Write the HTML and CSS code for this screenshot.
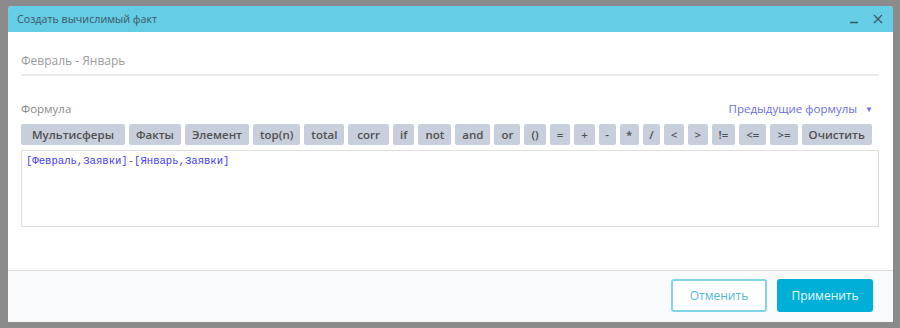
FILE: index.html
```html
<!DOCTYPE html>
<html lang="ru">

<head>
    <meta charset="UTF-8">
    <title>Создать вычислимый факт</title>
    <link rel="stylesheet" href="styles.css">
</head>

<body>
    <div class="dialog">
        <div class="dialog-header">
            <span class="dialog-title">Создать вычислимый факт</span>
            <div class="header-tools">
                <svg class="tool-icon" width="10" height="10" viewBox="0 0 10 10">
                    <path d="M1 8.5h8" stroke="#3f5a66" stroke-width="1.3" />
                </svg>
                <svg class="tool-icon" width="10" height="10" viewBox="0 0 10 10">
                    <path d="M1 1l8 8M9 1l-8 8" stroke="#3f5a66" stroke-width="1.4" />
                </svg>
            </div>
        </div>

        <div class="dialog-body">
            <div class="name-field">Февраль - Январь</div>

            <div class="formula-head">
                <span class="formula-label">Формула</span>
                <span class="prev-formulas">Предыдущие формулы <span class="caret">&#9660;</span></span>
            </div>

            <div class="toolbar">
                <button class="op-btn op-wide">Мультисферы</button>
                <button class="op-btn">Факты</button>
                <button class="op-btn">Элемент</button>
                <button class="op-btn">top(n)</button>
                <button class="op-btn">total</button>
                <button class="op-btn op-func">corr</button>
                <button class="op-btn">if</button>
                <button class="op-btn">not</button>
                <button class="op-btn">and</button>
                <button class="op-btn">or</button>
                <button class="op-btn">()</button>
                <button class="op-btn">=</button>
                <button class="op-btn">+</button>
                <button class="op-btn op-sym">-</button>
                <button class="op-btn op-sym">*</button>
                <button class="op-btn op-sym">/</button>
                <button class="op-btn op-sym">&lt;</button>
                <button class="op-btn op-sym">&gt;</button>
                <button class="op-btn">!=</button>
                <button class="op-btn">&lt;=</button>
                <button class="op-btn">&gt;=</button>
                <button class="op-btn">Очистить</button>
            </div>

            <div class="editor"><span class="token">[Февраль,Заявки]</span><span class="op">-</span><span class="token">[Январь,Заявки]</span></div>
        </div>

        <div class="dialog-footer">
            <button class="btn btn-cancel">Отменить</button>
            <button class="btn btn-apply">Применить</button>
        </div>
    </div>
</body>

</html>
```

FILE: styles.css
```css
* {
    margin: 0;
    padding: 0;
    box-sizing: border-box;
}

body {
    font-family: 'Open Sans', sans-serif;
    background-color: #8b8b8b;
    color: #555;
}

.dialog {
    display: flex;
    flex-direction: column;
    width: 885px;
    height: 316px;
    margin: 6px 0 0 8px;
    background-color: white;
    border-radius: 4px 4px 0 0;
    overflow: hidden;
}

.dialog-header {
    display: flex;
    align-items: center;
    justify-content: space-between;
    height: 26px;
    padding: 0 10px 0 9px;
    background-color: #66cde6;
}

.dialog-title {
    font-size: 10.7px;
    color: #3b5664;
}

.header-tools {
    display: flex;
    gap: 14px;
}

.dialog-body {
    flex: 1;
    padding: 0 14px 0 13px;
}

.name-field {
    height: 29px;
    margin-top: 15px;
    padding-top: 5px;
    font-size: 12px;
    color: #9a9a9a;
    border-bottom: 2px solid #ebebeb;
}

.formula-head {
    display: flex;
    justify-content: space-between;
    align-items: center;
    height: 20px;
    margin-top: 22px;
    padding-right: 6px;
    font-size: 11.5px;
}

.formula-label {
    color: #8a8a8a;
}

.prev-formulas {
    color: #6f6ee0;
}

.caret {
    font-size: 8px;
    margin-left: 5px;
    vertical-align: 1px;
}

.toolbar {
    display: flex;
    gap: 4px;
    margin-top: 6px;
}

.op-btn {
    height: 21px;
    min-width: 16px;
    padding: 0 7px;
    font-family: 'Open Sans', sans-serif;
    font-size: 11.5px;
    font-weight: 600;
    color: #505050;
    background-color: #c6cfdb;
    border: none;
    border-radius: 2px;
}

.op-wide {
    padding: 0 11px;
}

.op-func {
    padding: 0 9px;
}

.op-sym {
    padding: 0 6.5px;
}

.editor {
    height: 77px;
    margin-top: 5px;
    padding: 4px 4px;
    font-family: 'Liberation Mono', monospace;
    font-size: 10.6px;
    border: 1px solid #dedede;
}

.token {
    color: #4540f4;
}

.op {
    color: #666;
}

.dialog-footer {
    display: flex;
    justify-content: flex-end;
    align-items: center;
    gap: 10px;
    height: 52px;
    padding: 0 20px 2px 0;
    background-color: #f9fafc;
    border-top: 1px solid #dcdcdc;
}

.btn {
    width: 96px;
    height: 33px;
    font-family: 'Open Sans', sans-serif;
    font-size: 12px;
    border-radius: 3px;
}

.btn-cancel {
    color: #55b8da;
    background-color: white;
    border: 2px solid #80d4ea;
}

.btn-apply {
    color: #e9f8fc;
    background-color: #00afd7;
    border: none;
}
```
